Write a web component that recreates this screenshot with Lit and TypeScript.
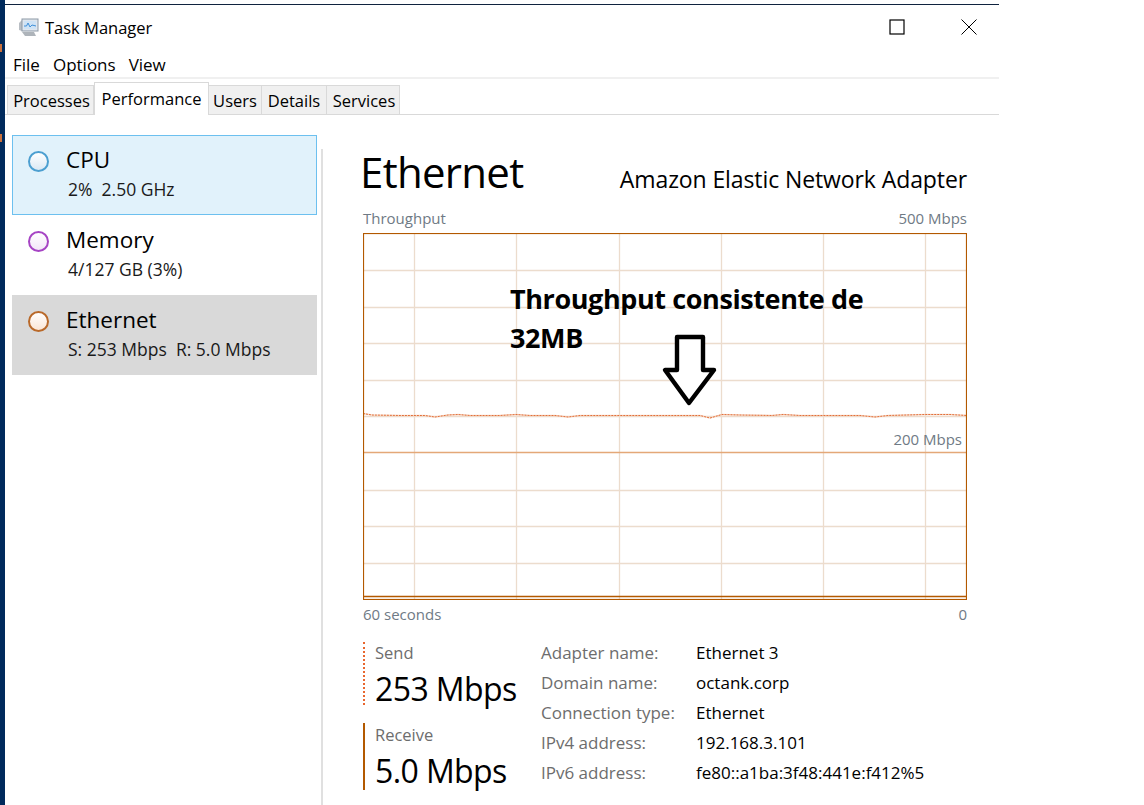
import { LitElement, html, css, svg } from "lit";
import { customElement } from "lit/decorators.js";

const vLines = [414.5, 516.5, 619.5, 721.5, 823.5, 925.5];
const hLines = [270.5, 307.5, 343.5, 380.5, 416.5, 490.5, 526.5, 563.5];

const dataPts = "363,413.5 372,415 400,415.5 425,415.5 435,417 448,415 458,414.5 470,415.5 500,415.5 516,414.5 530,415.5 555,415.5 568,417 580,415.5 620,415.5 660,415.5 700,415.5 710,418 722,414.5 740,415 772,415.5 783,414.5 800,415.5 860,415.5 875,417 888,415.5 925,414.5 950,414.5 967,415.5";

@customElement("app-root")
export class AppRoot extends LitElement {
  static styles = css`
    :host { display: block; width: 1144px; height: 805px; overflow: hidden; background: #fff; font-family: "Open Sans", "Noto Sans", sans-serif; color: #000; }
    .page { display: flex; height: 805px; }
    .strip { width: 5px; flex: none; background: #002a5c; position: relative; }
    .strip i { position: absolute; left: 0; width: 2px; height: 8px; background: #c8703c; }
    .strip i.a { top: 44px; }
    .strip i.b { top: 134px; }
    .win { width: 994px; flex: none; height: 805px; padding-top: 4px; box-sizing: border-box; display: flex; flex-direction: column; }
    .topline { height: 1px; background: #10233f; flex: none; }
    .title { height: 44px; flex: none; display: flex; align-items: center; padding-left: 13px; font-size: 16.5px; position: relative; }
    .title svg.app { margin-right: 6px; }
    .caps { margin-left: auto; display: flex; align-items: center; gap: 56px; padding-right: 22px; }
    .menu { height: 26px; padding-top: 2px; flex: none; display: flex; gap: 13px; padding-left: 8px; font-size: 17px; align-items: center; border-bottom: 2px solid #f0f0f0; }
    .tabs { height: 35px; flex: none; display: flex; align-items: flex-end; padding-left: 2px; border-bottom: 1px solid #d9d9d9; font-size: 16.5px; }
    .tab { height: 29px; box-sizing: border-box; background: #f0f0f0; border: 1px solid #d9d9d9; border-bottom: none; border-left: none; display: flex; align-items: center; justify-content: center; }
    .tab.first { border-left: 1px solid #d9d9d9; padding-left: 2px; }
    .tab.last { padding-left: 2px; }
    .tab.on { height: 33px; background: #fff; margin-bottom: -1px; padding-bottom: 2px; border-left: 1px solid #d9d9d9; }
    .body { flex: 1; display: flex; min-height: 0; }
    .side { width: 316px; flex: none; padding: 20px 0 0 7px; box-sizing: border-box; }
    .item { width: 305px; height: 80px; box-sizing: border-box; display: flex; padding: 9px 0 0 15px; gap: 17px; border: 1px solid transparent; }
    .item.cpu { background: #e1f2fb; border-color: #6cc0ef; }
    .item.eth { background: #d9d9d9; border-color: #d9d9d9; }
    .dot { width: 21px; height: 21px; flex: none; border-radius: 50%; box-sizing: border-box; border: 2px solid; margin-top: 6px; }
    .cpu .dot { border-color: #4c9fd0; background: linear-gradient(#fff, #dbe9f4); }
    .mem .dot { border-color: #a644c4; background: linear-gradient(#fff, #f3e6f8); }
    .eth .dot { border-color: #b9692a; background: linear-gradient(#fff, #fbe6d6); }
    .name { font-size: 22.5px; line-height: 30px; }
    .sub { font-size: 17.5px; line-height: 24px; margin: 2px 0 0 2px; color: #1a1a1a; white-space: nowrap; }
    .divider { width: 2px; flex: none; background: #e0e0e0; margin-top: 34px; }
    .main { flex: 1; padding: 30px 32px 0 40px; box-sizing: border-box; min-width: 0; }
    .head { display: flex; justify-content: space-between; align-items: baseline; height: 55px; margin-left: -3px; }
    .head h1 { margin: 0; font-weight: 400; font-size: 42px; line-height: 53px; letter-spacing: -0.7px; }
    .head span { font-size: 23px; letter-spacing: -0.1px; }
    .axis { display: flex; justify-content: space-between; font-size: 15px; line-height: 20px; color: #6f7a85; }
    .top { margin-top: 8px; height: 25px; }
    .chart { width: 604px; height: 367px; position: relative; }
    .chart svg { display: block; }
    .note { position: absolute; left: 147px; top: 46px; width: 400px; font-weight: 700; font-size: 27px; line-height: 39px; letter-spacing: -0.4px; }
    .mark { position: absolute; right: 5px; top: 196px; font-size: 15px; color: #6f7a85; }
    .foot { margin-top: 4px; }
    .stats { display: flex; margin-top: 18px; }
    .rates { width: 178px; flex: none; display: flex; flex-direction: column; gap: 18px; }
    .rate { border-left: 2px solid #b35900; padding: 1px 0 0 10px; height: 67px; box-sizing: border-box; }
    .rate.send { height: 63px; padding-top: 0; border-left: 2px dotted #e8662e; }
    .rate label { display: block; font-size: 16.5px; line-height: 22px; color: #6d6d6d; }
    .rate b { display: block; font-weight: 400; font-size: 32px; line-height: 44px; margin-top: 3px; letter-spacing: -0.6px; }
    .info { display: grid; grid-template-columns: 155px auto; grid-auto-rows: 30px; font-size: 17px; line-height: 22px; }
    .info .k { color: #6d6d6d; }
    .filler { flex: 1; background: #fff; }
  `;

  private chart() {
    return html`<svg width="604" height="367" viewBox="363 233 604 367">
      ${vLines.map((x) => svg`<line x1=${x} x2=${x} y1="234" y2="599" stroke="#ecdccd" stroke-width="1.3"></line>`)}
      ${hLines.map((y) => svg`<line x1="364" x2="966" y1=${y} y2=${y} stroke="#ecdccd" stroke-width="1.3"></line>`)}
      <line x1="364" x2="966" y1="452.5" y2="452.5" stroke="#e4a878" stroke-width="1.4"></line>
      <polyline points=${dataPts} fill="none" stroke="#f8dccc" stroke-width="1.5"></polyline>
      <polyline points=${dataPts} fill="none" stroke="#e2703a" stroke-width="1" stroke-dasharray="2 1"></polyline>
      <line x1="364" x2="966" y1="596.5" y2="596.5" stroke="#b35900" stroke-width="1.3"></line>
      <rect x="363.5" y="233.5" width="603" height="366" fill="none" stroke="#b35900" stroke-width="1.2"></rect>
      <path d="M677 337H703V370H714L689 403L665 370H677Z" fill="#fff" stroke="#000" stroke-width="4.4" stroke-linejoin="round"></path>
    </svg>`;
  }

  render() {
    return html`<div class="page">
      <div class="strip"><i class="a"></i><i class="b"></i></div>
      <div class="win">
        <div class="topline"></div>
        <div class="title">
          <svg class="app" width="21" height="21" viewBox="0 0 21 21">
            <path d="M1 6 L4 3 L4 14 L1 13Z" fill="#b9bec4"></path>
            <rect x="4" y="2" width="16" height="12" fill="#dfe6ee" stroke="#8d99a6"></rect>
            <rect x="6" y="4" width="12" height="8" fill="#cfe3f5"></rect>
            <path d="M6 9L8.5 9L10 6L12 10L14 8L18 9" fill="none" stroke="#3f8fd8" stroke-width="1"></path>
            <path d="M4 15L16 15L18 19L7 19Z" fill="#aeb4ba"></path>
          </svg>
          Task Manager
          <div class="caps">
            <svg width="16" height="16" viewBox="0 0 16 16"><rect x="1" y="1" width="14" height="14" fill="none" stroke="#000" stroke-width="1.2"></rect></svg>
            <svg width="16" height="16" viewBox="0 0 16 16"><path d="M0.5 0.5L15.5 15.5M15.5 0.5L0.5 15.5" stroke="#000" stroke-width="1"></path></svg>
          </div>
        </div>
        <div class="menu"><span>File</span><span>Options</span><span>View</span></div>
        <div class="tabs">
          <div class="tab first" style="width:87px">Processes</div>
          <div class="tab on" style="width:115px">Performance</div>
          <div class="tab" style="width:53px">Users</div>
          <div class="tab" style="width:65px">Details</div>
          <div class="tab last" style="width:73px">Services</div>
        </div>
        <div class="body">
          <div class="side">
            <div class="item cpu"><div class="dot"></div><div><div class="name">CPU</div><div class="sub">2%&nbsp; 2.50 GHz</div></div></div>
            <div class="item mem"><div class="dot"></div><div><div class="name">Memory</div><div class="sub">4/127 GB (3%)</div></div></div>
            <div class="item eth"><div class="dot"></div><div><div class="name">Ethernet</div><div class="sub">S: 253 Mbps&nbsp; R: 5.0 Mbps</div></div></div>
          </div>
          <div class="divider"></div>
          <div class="main">
            <div class="head"><h1>Ethernet</h1><span>Amazon Elastic Network Adapter</span></div>
            <div class="axis top"><span>Throughput</span><span>500 Mbps</span></div>
            <div class="chart">
              ${this.chart()}
              <div class="note">Throughput consistente de 32MB</div>
              <div class="mark">200 Mbps</div>
            </div>
            <div class="axis foot"><span>60 seconds</span><span>0</span></div>
            <div class="stats">
              <div class="rates">
                <div class="rate send"><label>Send</label><b>253 Mbps</b></div>
                <div class="rate"><label>Receive</label><b>5.0 Mbps</b></div>
              </div>
              <div class="info">
                <span class="k">Adapter name:</span><span>Ethernet 3</span>
                <span class="k">Domain name:</span><span>octank.corp</span>
                <span class="k">Connection type:</span><span>Ethernet</span>
                <span class="k">IPv4 address:</span><span>192.168.3.101</span>
                <span class="k">IPv6 address:</span><span>fe80::a1ba:3f48:441e:f412%5</span>
              </div>
            </div>
          </div>
        </div>
      </div>
      <div class="filler"></div>
    </div>`;
  }
}
